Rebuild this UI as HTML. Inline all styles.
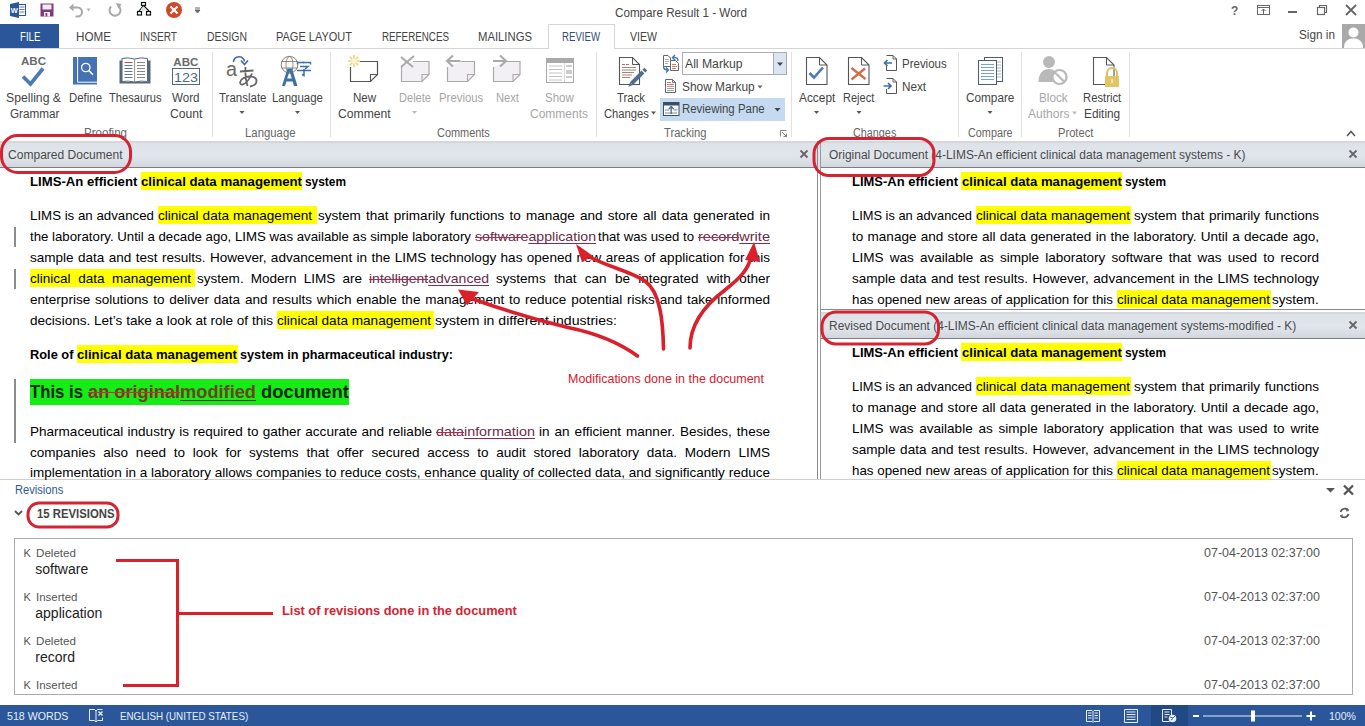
<!DOCTYPE html><html><head><meta charset="utf-8"><title>Compare Result 1 - Word</title><style>
*{margin:0;padding:0;box-sizing:border-box}
html,body{width:1365px;height:726px;overflow:hidden;background:#fff;font-family:"Liberation Sans",sans-serif}
.t{position:absolute;white-space:nowrap;transform-origin:0 0}
.del{text-decoration:line-through;text-decoration-color:#b02a4a;color:#6a2a48;text-decoration-skip-ink:none}
.gdel{text-decoration:line-through;text-decoration-color:#d02a3a;color:#7a3a22;text-decoration-skip-ink:none}
.gins{text-decoration:underline;text-decoration-color:#3a3020;color:#6a4420;text-decoration-skip-ink:none;text-underline-offset:2px}
.ins{text-decoration:underline;text-decoration-color:#8a2a48;color:#6a2a48;text-underline-offset:2px;text-decoration-skip-ink:none}
</style></head><body><div style="position:absolute;left:0px;top:48px;width:1365px;height:1px;background:#d5d5d5"></div><div style="position:absolute;left:0px;top:24px;width:59px;height:24px;background:#2b579a"></div><div style="position:absolute;left:548px;top:24px;width:67px;height:25px;background:#fff;border:1px solid #d5d5d5;border-bottom:none"></div><div style="position:absolute;left:1342px;top:24px;width:23px;height:24px;background:#a9a9a9"></div><div style="position:absolute;left:660px;top:97.5px;width:125px;height:23px;background:#c5daf0"></div><div style="position:absolute;left:212px;top:52px;width:1px;height:85px;background:#e1e1e1"></div><div style="position:absolute;left:330px;top:52px;width:1px;height:85px;background:#e1e1e1"></div><div style="position:absolute;left:596px;top:52px;width:1px;height:85px;background:#e1e1e1"></div><div style="position:absolute;left:791px;top:52px;width:1px;height:85px;background:#e1e1e1"></div><div style="position:absolute;left:958px;top:52px;width:1px;height:85px;background:#e1e1e1"></div><div style="position:absolute;left:1021px;top:52px;width:1px;height:85px;background:#e1e1e1"></div><div style="position:absolute;left:1129px;top:52px;width:1px;height:85px;background:#e1e1e1"></div><div style="position:absolute;left:0px;top:141px;width:817px;height:2px;background:#d6d6db"></div><div style="position:absolute;left:0px;top:143px;width:817px;height:24px;background:linear-gradient(#dde1e8 0%,#e1e5ec 50%,#d9dde4 80%,#d3d6dc 100%)"></div><div style="position:absolute;left:0px;top:167px;width:817px;height:1px;background:#7c7c86"></div><div style="position:absolute;left:821px;top:141px;width:544px;height:2px;background:#d6d6db"></div><div style="position:absolute;left:821px;top:143px;width:544px;height:24px;background:linear-gradient(#dde1e8 0%,#e1e5ec 50%,#d9dde4 80%,#d3d6dc 100%)"></div><div style="position:absolute;left:821px;top:167px;width:544px;height:1px;background:#7c7c86"></div><div style="position:absolute;left:821px;top:312px;width:544px;height:2px;background:#d6d6db"></div><div style="position:absolute;left:821px;top:314px;width:544px;height:24px;background:linear-gradient(#dde1e8 0%,#e1e5ec 50%,#d9dde4 80%,#d3d6dc 100%)"></div><div style="position:absolute;left:821px;top:338px;width:544px;height:1px;background:#7c7c86"></div><div style="position:absolute;left:817px;top:141px;width:1px;height:338px;background:#8a8a8a"></div><div style="position:absolute;left:820px;top:141px;width:1px;height:338px;background:#9a9a9a"></div><div style="position:absolute;left:818px;top:141px;width:2px;height:27px;background:#dfe3ea"></div><div style="position:absolute;left:821px;top:309px;width:544px;height:1px;background:#8a8a8a"></div><div style="position:absolute;left:0px;top:479px;width:1365px;height:1px;background:#cfcfcf"></div><div style="position:absolute;left:14px;top:227px;width:2px;height:20px;background:#8c8c8c"></div><div style="position:absolute;left:14px;top:269px;width:2px;height:20px;background:#8c8c8c"></div><div style="position:absolute;left:14px;top:379px;width:2px;height:64px;background:#8c8c8c"></div><div style="position:absolute;left:141px;top:172px;width:161px;height:18px;background:#ffff00"></div><div style="position:absolute;left:158px;top:206px;width:159px;height:18px;background:#ffff00"></div><div style="position:absolute;left:30px;top:269px;width:165px;height:18px;background:#ffff00"></div><div style="position:absolute;left:277px;top:311px;width:157px;height:18px;background:#ffff00"></div><div style="position:absolute;left:77px;top:345px;width:161px;height:18px;background:#ffff00"></div><div style="position:absolute;left:30px;top:379px;width:319px;height:26px;background:#16ec16"></div><div style="position:absolute;left:961px;top:172px;width:161px;height:18px;background:#ffff00"></div><div style="position:absolute;left:976px;top:206px;width:155px;height:18px;background:#ffff00"></div><div style="position:absolute;left:1117px;top:290px;width:154px;height:18px;background:#ffff00"></div><div style="position:absolute;left:961px;top:343px;width:161px;height:18px;background:#ffff00"></div><div style="position:absolute;left:976px;top:377px;width:155px;height:18px;background:#ffff00"></div><div style="position:absolute;left:1117px;top:461px;width:154px;height:18px;background:#ffff00"></div><div style="position:absolute;left:14px;top:538px;width:1339px;height:157px;border:1px solid #ababab"></div><div style="position:absolute;left:0px;top:705px;width:1365px;height:21px;background:#2b579a"></div><div style="position:absolute;left:1151px;top:705px;width:37px;height:21px;background:#214a84"></div><div class="t" style="left:30px;top:176.00px;font-size:12.6px;line-height:12.6px;color:#000;font-weight:bold;;transform:scaleX(1.0436);">LIMS-An efficient </div><div class="t" style="left:141px;top:176.00px;font-size:12.6px;line-height:12.6px;color:#000;font-weight:bold;;transform:scaleX(1.0504);">clinical data management</div><div class="t" style="left:305px;top:176.00px;font-size:12.6px;line-height:12.6px;color:#000;font-weight:bold;;transform:scaleX(0.9442);">system</div><div class="t" style="left:30px;top:210.00px;font-size:12.6px;line-height:12.6px;color:#000;font-weight:normal;;transform:scaleX(1.0542);">LIMS is an advanced</div><div class="t" style="left:158px;top:210.00px;font-size:12.6px;line-height:12.6px;color:#000;font-weight:normal;;transform:scaleX(1.0750);width:143.26px;white-space:normal;text-align:justify;text-align-last:justify;height:12.6px;">clinical data management</div><div class="t" style="left:318px;top:210.00px;font-size:12.6px;line-height:12.6px;color:#000;font-weight:normal;;transform:scaleX(1.0750);width:420.47px;white-space:normal;text-align:justify;text-align-last:justify;height:12.6px;">system that primarily functions to manage and store all data generated in</div><div class="t" style="left:30px;top:231.00px;font-size:12.6px;line-height:12.6px;color:#000;font-weight:normal;;transform:scaleX(1.0505);">the laboratory. Until a decade ago, LIMS was available as simple laboratory</div><div class="t" style="left:475px;top:231.00px;font-size:12.6px;line-height:12.6px;color:#000;font-weight:normal;;transform:scaleX(1.1222);"><span class="del">software</span><span class="ins">application</span></div><div class="t" style="left:598px;top:231.00px;font-size:12.6px;line-height:12.6px;color:#000;font-weight:normal;;transform:scaleX(1.0467);">that was used to</div><div class="t" style="left:698px;top:231.00px;font-size:12.6px;line-height:12.6px;color:#000;font-weight:normal;;transform:scaleX(1.1558);"><span class="del">record</span><span class="ins">write</span></div><div class="t" style="left:30px;top:252.00px;font-size:12.6px;line-height:12.6px;color:#000;font-weight:normal;;transform:scaleX(1.0750);width:688.37px;white-space:normal;text-align:justify;text-align-last:justify;height:12.6px;">sample data and test results. However, advancement in the LIMS technology has opened new areas of application for this</div><div class="t" style="left:30px;top:273.00px;font-size:12.6px;line-height:12.6px;color:#000;font-weight:normal;;transform:scaleX(1.0750);width:149.77px;white-space:normal;text-align:justify;text-align-last:justify;height:12.6px;">clinical data management</div><div class="t" style="left:197px;top:273.00px;font-size:12.6px;line-height:12.6px;color:#000;font-weight:normal;;transform:scaleX(1.0750);width:153.49px;white-space:normal;text-align:justify;text-align-last:justify;height:12.6px;">system. Modern LIMS are</div><div class="t" style="left:369px;top:273.00px;font-size:12.6px;line-height:12.6px;color:#000;font-weight:normal;;transform:scaleX(1.1127);"><span class="del">intelligent</span><span class="ins">advanced</span></div><div class="t" style="left:496px;top:273.00px;font-size:12.6px;line-height:12.6px;color:#000;font-weight:normal;;transform:scaleX(1.0750);width:254.88px;white-space:normal;text-align:justify;text-align-last:justify;height:12.6px;">systems that can be integrated with other</div><div class="t" style="left:30px;top:294.00px;font-size:12.6px;line-height:12.6px;color:#000;font-weight:normal;;transform:scaleX(1.0750);width:688.37px;white-space:normal;text-align:justify;text-align-last:justify;height:12.6px;">enterprise solutions to deliver data and results which enable the management to reduce potential risks and take informed</div><div class="t" style="left:30px;top:315.00px;font-size:12.6px;line-height:12.6px;color:#000;font-weight:normal;;transform:scaleX(1.0757);">decisions. Let’s take a look at role of this</div><div class="t" style="left:277px;top:315.00px;font-size:12.6px;line-height:12.6px;color:#000;font-weight:normal;;transform:scaleX(1.0783);">clinical data management</div><div class="t" style="left:435px;top:315.00px;font-size:12.6px;line-height:12.6px;color:#000;font-weight:normal;;transform:scaleX(1.1175);">system in different industries:</div><div class="t" style="left:30px;top:349.00px;font-size:12.6px;line-height:12.6px;color:#000;font-weight:bold;;transform:scaleX(1.0176);">Role of </div><div class="t" style="left:77px;top:349.00px;font-size:12.6px;line-height:12.6px;color:#000;font-weight:bold;;transform:scaleX(1.0438);">clinical data management</div><div class="t" style="left:240px;top:349.00px;font-size:12.6px;line-height:12.6px;color:#000;font-weight:bold;;transform:scaleX(1.0077);">system in pharmaceutical industry:</div><div class="t" style="left:30px;top:384.00px;font-size:17.5px;line-height:17.5px;color:#0a2a0a;font-weight:bold;;transform:scaleX(0.9560);">This is</div><div class="t" style="left:88px;top:384.00px;font-size:17.5px;line-height:17.5px;color:#000;font-weight:bold;;transform:scaleX(1.0409);"><span class="gdel">an original</span><span class="gins">modified</span></div><div class="t" style="left:261px;top:384.00px;font-size:17.5px;line-height:17.5px;color:#0a2a0a;font-weight:bold;;transform:scaleX(1.0523);">document</div><div class="t" style="left:30px;top:426.00px;font-size:12.6px;line-height:12.6px;color:#000;font-weight:normal;;transform:scaleX(1.0750);width:373.95px;white-space:normal;text-align:justify;text-align-last:justify;height:12.6px;">Pharmaceutical industry is required to gather accurate and reliable</div><div class="t" style="left:436px;top:426.00px;font-size:12.6px;line-height:12.6px;color:#000;font-weight:normal;;transform:scaleX(1.1402);"><span class="del">data</span><span class="ins">information</span></div><div class="t" style="left:539px;top:426.00px;font-size:12.6px;line-height:12.6px;color:#000;font-weight:normal;;transform:scaleX(1.0750);width:214.88px;white-space:normal;text-align:justify;text-align-last:justify;height:12.6px;">in an efficient manner. Besides, these</div><div class="t" style="left:30px;top:447.00px;font-size:12.6px;line-height:12.6px;color:#000;font-weight:normal;;transform:scaleX(1.0750);width:688.37px;white-space:normal;text-align:justify;text-align-last:justify;height:12.6px;">companies also need to look for systems that offer secured access to audit stored laboratory data. Modern LIMS</div><div class="t" style="left:30px;top:467.00px;font-size:12.6px;line-height:12.6px;color:#000;font-weight:normal;;transform:scaleX(1.0731);">implementation in a laboratory allows companies to reduce costs, enhance quality of collected data, and significantly reduce</div><div class="t" style="left:852px;top:176.00px;font-size:12.6px;line-height:12.6px;color:#000;font-weight:bold;;transform:scaleX(1.0305);">LIMS-An efficient</div><div class="t" style="left:962px;top:176.00px;font-size:12.6px;line-height:12.6px;color:#000;font-weight:bold;;transform:scaleX(1.0438);">clinical data management</div><div class="t" style="left:1125px;top:176.00px;font-size:12.6px;line-height:12.6px;color:#000;font-weight:bold;;transform:scaleX(0.9442);">system</div><div class="t" style="left:852px;top:210.00px;font-size:12.6px;line-height:12.6px;color:#000;font-weight:normal;;transform:scaleX(1.0202);">LIMS is an advanced</div><div class="t" style="left:976px;top:210.00px;font-size:12.6px;line-height:12.6px;color:#000;font-weight:normal;;transform:scaleX(1.0750);width:143.26px;white-space:normal;text-align:justify;text-align-last:justify;height:12.6px;">clinical data management</div><div class="t" style="left:1134px;top:210.00px;font-size:12.6px;line-height:12.6px;color:#000;font-weight:normal;;transform:scaleX(1.0750);width:172.09px;white-space:normal;text-align:justify;text-align-last:justify;height:12.6px;">system that primarily functions</div><div class="t" style="left:852px;top:231.00px;font-size:12.6px;line-height:12.6px;color:#000;font-weight:normal;;transform:scaleX(1.0750);width:434.42px;white-space:normal;text-align:justify;text-align-last:justify;height:12.6px;">to manage and store all data generated in the laboratory. Until a decade ago,</div><div class="t" style="left:852px;top:252.00px;font-size:12.6px;line-height:12.6px;color:#000;font-weight:normal;;transform:scaleX(1.0750);width:434.42px;white-space:normal;text-align:justify;text-align-last:justify;height:12.6px;">LIMS was available as simple laboratory software that was used to record</div><div class="t" style="left:852px;top:273.00px;font-size:12.6px;line-height:12.6px;color:#000;font-weight:normal;;transform:scaleX(1.0750);width:434.42px;white-space:normal;text-align:justify;text-align-last:justify;height:12.6px;">sample data and test results. However, advancement in the LIMS technology</div><div class="t" style="left:852px;top:294.00px;font-size:12.6px;line-height:12.6px;color:#000;font-weight:normal;;transform:scaleX(1.0590);">has opened new areas of application for this</div><div class="t" style="left:1117px;top:294.00px;font-size:12.6px;line-height:12.6px;color:#000;font-weight:normal;;transform:scaleX(1.0713);">clinical data management</div><div class="t" style="left:1272px;top:294.00px;font-size:12.6px;line-height:12.6px;color:#000;font-weight:normal;;transform:scaleX(1.0750);width:43.72px;white-space:normal;text-align:justify;text-align-last:justify;height:12.6px;">system.</div><div class="t" style="left:852px;top:347.00px;font-size:12.6px;line-height:12.6px;color:#000;font-weight:bold;;transform:scaleX(1.0305);">LIMS-An efficient</div><div class="t" style="left:962px;top:347.00px;font-size:12.6px;line-height:12.6px;color:#000;font-weight:bold;;transform:scaleX(1.0438);">clinical data management</div><div class="t" style="left:1125px;top:347.00px;font-size:12.6px;line-height:12.6px;color:#000;font-weight:bold;;transform:scaleX(0.9442);">system</div><div class="t" style="left:852px;top:381.00px;font-size:12.6px;line-height:12.6px;color:#000;font-weight:normal;;transform:scaleX(1.0202);">LIMS is an advanced</div><div class="t" style="left:976px;top:381.00px;font-size:12.6px;line-height:12.6px;color:#000;font-weight:normal;;transform:scaleX(1.0750);width:143.26px;white-space:normal;text-align:justify;text-align-last:justify;height:12.6px;">clinical data management</div><div class="t" style="left:1134px;top:381.00px;font-size:12.6px;line-height:12.6px;color:#000;font-weight:normal;;transform:scaleX(1.0750);width:172.09px;white-space:normal;text-align:justify;text-align-last:justify;height:12.6px;">system that primarily functions</div><div class="t" style="left:852px;top:402.00px;font-size:12.6px;line-height:12.6px;color:#000;font-weight:normal;;transform:scaleX(1.0750);width:434.42px;white-space:normal;text-align:justify;text-align-last:justify;height:12.6px;">to manage and store all data generated in the laboratory. Until a decade ago,</div><div class="t" style="left:852px;top:423.00px;font-size:12.6px;line-height:12.6px;color:#000;font-weight:normal;;transform:scaleX(1.0750);width:434.42px;white-space:normal;text-align:justify;text-align-last:justify;height:12.6px;">LIMS was available as simple laboratory application that was used to write</div><div class="t" style="left:852px;top:444.00px;font-size:12.6px;line-height:12.6px;color:#000;font-weight:normal;;transform:scaleX(1.0750);width:434.42px;white-space:normal;text-align:justify;text-align-last:justify;height:12.6px;">sample data and test results. However, advancement in the LIMS technology</div><div class="t" style="left:852px;top:465.00px;font-size:12.6px;line-height:12.6px;color:#000;font-weight:normal;;transform:scaleX(1.0590);">has opened new areas of application for this</div><div class="t" style="left:1117px;top:465.00px;font-size:12.6px;line-height:12.6px;color:#000;font-weight:normal;;transform:scaleX(1.0713);">clinical data management</div><div class="t" style="left:1272px;top:465.00px;font-size:12.6px;line-height:12.6px;color:#000;font-weight:normal;;transform:scaleX(1.0750);width:43.72px;white-space:normal;text-align:justify;text-align-last:justify;height:12.6px;">system.</div><div class="t" style="left:615px;top:6.50px;font-size:12.5px;line-height:12.5px;color:#444;font-weight:normal;;transform:scaleX(0.9329);">Compare Result 1 - Word</div><div class="t" style="left:19.5px;top:31.00px;font-size:12.5px;line-height:12.5px;color:#fff;font-weight:normal;;transform:scaleX(0.7763);">FILE</div><div class="t" style="left:76px;top:31.00px;font-size:12.5px;line-height:12.5px;color:#444;font-weight:normal;;transform:scaleX(0.9333);">HOME</div><div class="t" style="left:140px;top:31.00px;font-size:12.5px;line-height:12.5px;color:#444;font-weight:normal;;transform:scaleX(0.8110);">INSERT</div><div class="t" style="left:207px;top:31.00px;font-size:12.5px;line-height:12.5px;color:#444;font-weight:normal;;transform:scaleX(0.8344);">DESIGN</div><div class="t" style="left:276px;top:31.00px;font-size:12.5px;line-height:12.5px;color:#444;font-weight:normal;;transform:scaleX(0.8799);">PAGE LAYOUT</div><div class="t" style="left:382px;top:31.00px;font-size:12.5px;line-height:12.5px;color:#444;font-weight:normal;;transform:scaleX(0.7842);">REFERENCES</div><div class="t" style="left:478px;top:31.00px;font-size:12.5px;line-height:12.5px;color:#444;font-weight:normal;;transform:scaleX(0.9038);">MAILINGS</div><div class="t" style="left:630px;top:31.00px;font-size:12.5px;line-height:12.5px;color:#444;font-weight:normal;;transform:scaleX(0.8450);">VIEW</div><div class="t" style="left:562px;top:31.00px;font-size:12.5px;line-height:12.5px;color:#2f5078;font-weight:normal;;transform:scaleX(0.7706);">REVIEW</div><div class="t" style="left:1299px;top:29.00px;font-size:12.5px;line-height:12.5px;color:#444;font-weight:normal;;transform:scaleX(0.9416);">Sign in</div><div class="t" style="left:6px;top:92.00px;font-size:12.5px;line-height:12.5px;color:#444;font-weight:normal;;transform:scaleX(0.9770);">Spelling &amp;</div><div class="t" style="left:9.5px;top:107.50px;font-size:12.5px;line-height:12.5px;color:#444;font-weight:normal;;transform:scaleX(0.9378);">Grammar</div><div class="t" style="left:68.5px;top:92.00px;font-size:12.5px;line-height:12.5px;color:#444;font-weight:normal;;transform:scaleX(0.9131);">Define</div><div class="t" style="left:109px;top:92.00px;font-size:12.5px;line-height:12.5px;color:#444;font-weight:normal;;transform:scaleX(0.8889);">Thesaurus</div><div class="t" style="left:171.5px;top:92.00px;font-size:12.5px;line-height:12.5px;color:#444;font-weight:normal;;transform:scaleX(0.9278);">Word</div><div class="t" style="left:169.5px;top:107.50px;font-size:12.5px;line-height:12.5px;color:#444;font-weight:normal;;transform:scaleX(0.9742);">Count</div><div class="t" style="left:218.5px;top:92.00px;font-size:12.5px;line-height:12.5px;color:#444;font-weight:normal;;transform:scaleX(0.9195);">Translate</div><div class="t" style="left:271.7px;top:92.00px;font-size:12.5px;line-height:12.5px;color:#444;font-weight:normal;;transform:scaleX(0.9169);">Language</div><div class="t" style="left:352.6px;top:92.00px;font-size:12.5px;line-height:12.5px;color:#444;font-weight:normal;;transform:scaleX(0.9274);">New</div><div class="t" style="left:338px;top:107.50px;font-size:12.5px;line-height:12.5px;color:#444;font-weight:normal;;transform:scaleX(0.9725);">Comment</div><div class="t" style="left:398.7px;top:92.00px;font-size:12.5px;line-height:12.5px;color:#a6a6a6;font-weight:normal;;transform:scaleX(0.8854);">Delete</div><div class="t" style="left:438.5px;top:92.00px;font-size:12.5px;line-height:12.5px;color:#a6a6a6;font-weight:normal;;transform:scaleX(0.9108);">Previous</div><div class="t" style="left:495.6px;top:92.00px;font-size:12.5px;line-height:12.5px;color:#a6a6a6;font-weight:normal;;transform:scaleX(0.8909);">Next</div><div class="t" style="left:545px;top:92.00px;font-size:12.5px;line-height:12.5px;color:#a6a6a6;font-weight:normal;;transform:scaleX(0.9207);">Show</div><div class="t" style="left:530.4px;top:107.50px;font-size:12.5px;line-height:12.5px;color:#a6a6a6;font-weight:normal;;transform:scaleX(0.9597);">Comments</div><div class="t" style="left:617px;top:92.00px;font-size:12.5px;line-height:12.5px;color:#444;font-weight:normal;;transform:scaleX(0.9092);">Track</div><div class="t" style="left:603.7px;top:107.50px;font-size:12.5px;line-height:12.5px;color:#444;font-weight:normal;;transform:scaleX(0.8972);">Changes</div><div class="t" style="left:685px;top:57.70px;font-size:12.5px;line-height:12.5px;color:#444;font-weight:normal;;transform:scaleX(0.9755);">All Markup</div><div class="t" style="left:682px;top:80.50px;font-size:12.5px;line-height:12.5px;color:#444;font-weight:normal;;transform:scaleX(0.9511);">Show Markup</div><div class="t" style="left:682.4px;top:103.20px;font-size:12.5px;line-height:12.5px;color:#444;font-weight:normal;;transform:scaleX(0.9143);">Reviewing Pane</div><div class="t" style="left:798.5px;top:92.00px;font-size:12.5px;line-height:12.5px;color:#444;font-weight:normal;;transform:scaleX(0.9498);">Accept</div><div class="t" style="left:843.4px;top:92.00px;font-size:12.5px;line-height:12.5px;color:#444;font-weight:normal;;transform:scaleX(0.8832);">Reject</div><div class="t" style="left:902.3px;top:57.50px;font-size:12.5px;line-height:12.5px;color:#444;font-weight:normal;;transform:scaleX(0.9190);">Previous</div><div class="t" style="left:902.3px;top:80.50px;font-size:12.5px;line-height:12.5px;color:#444;font-weight:normal;;transform:scaleX(0.9376);">Next</div><div class="t" style="left:965.6px;top:92.00px;font-size:12.5px;line-height:12.5px;color:#444;font-weight:normal;;transform:scaleX(0.9412);">Compare</div><div class="t" style="left:1039.4px;top:92.00px;font-size:12.5px;line-height:12.5px;color:#a6a6a6;font-weight:normal;;transform:scaleX(0.9353);">Block</div><div class="t" style="left:1028.3px;top:107.50px;font-size:12.5px;line-height:12.5px;color:#a6a6a6;font-weight:normal;;transform:scaleX(0.9630);">Authors</div><div class="t" style="left:1083.4px;top:92.00px;font-size:12.5px;line-height:12.5px;color:#444;font-weight:normal;;transform:scaleX(0.9015);">Restrict</div><div class="t" style="left:1084.4px;top:107.50px;font-size:12.5px;line-height:12.5px;color:#444;font-weight:normal;;transform:scaleX(0.9468);">Editing</div><div class="t" style="left:84px;top:126.50px;font-size:12px;line-height:12px;color:#666;font-weight:normal;;transform:scaleX(0.9619);">Proofing</div><div class="t" style="left:245px;top:126.50px;font-size:12px;line-height:12px;color:#666;font-weight:normal;;transform:scaleX(0.9459);">Language</div><div class="t" style="left:436.7px;top:126.50px;font-size:12px;line-height:12px;color:#666;font-weight:normal;;transform:scaleX(0.9101);">Comments</div><div class="t" style="left:664px;top:126.50px;font-size:12px;line-height:12px;color:#666;font-weight:normal;;transform:scaleX(0.9325);">Tracking</div><div class="t" style="left:852.7px;top:126.50px;font-size:12px;line-height:12px;color:#666;font-weight:normal;;transform:scaleX(0.9012);">Changes</div><div class="t" style="left:967.8px;top:126.50px;font-size:12px;line-height:12px;color:#666;font-weight:normal;;transform:scaleX(0.9036);">Compare</div><div class="t" style="left:1057.5px;top:126.50px;font-size:12px;line-height:12px;color:#666;font-weight:normal;;transform:scaleX(0.9286);">Protect</div><div class="t" style="left:7.5px;top:149.00px;font-size:12px;line-height:12px;color:#4a4a4a;font-weight:normal;;transform:scaleX(1.0038);">Compared Document</div><div class="t" style="left:828.5px;top:149.00px;font-size:12px;line-height:12px;color:#4a4a4a;font-weight:normal;;transform:scaleX(0.9965);">Original Document (4-LIMS-An efficient clinical data management systems - K)</div><div class="t" style="left:828.7px;top:320.00px;font-size:12px;line-height:12px;color:#4a4a4a;font-weight:normal;;transform:scaleX(0.9957);">Revised Document (4-LIMS-An efficient clinical data management systems-modified - K)</div><div class="t" style="left:14.5px;top:483.50px;font-size:12.5px;line-height:12.5px;color:#2e5b98;font-weight:normal;z-index:5;;transform:scaleX(0.8913);">Revisions</div><div class="t" style="left:36.5px;top:507.70px;font-size:12.5px;line-height:12.5px;color:#444;font-weight:bold;z-index:5;;transform:scaleX(0.9069);">15 REVISIONS</div><div class="t" style="left:23.4px;top:548.00px;font-size:11px;line-height:11px;color:#555;font-weight:normal;z-index:5;;">K</div><div class="t" style="left:36px;top:548.00px;font-size:11px;line-height:11px;color:#555;font-weight:normal;z-index:5;;transform:scaleX(1.0548);">Deleted</div><div class="t" style="left:35.3px;top:561.50px;font-size:14px;line-height:14px;color:#222;font-weight:normal;z-index:5;;">software</div><div class="t" style="left:1204px;top:547.00px;font-size:12px;line-height:12px;color:#555;font-weight:normal;z-index:5;;transform:scaleX(1.0409);">07-04-2013 02:37:00</div><div class="t" style="left:23.4px;top:592.00px;font-size:11px;line-height:11px;color:#555;font-weight:normal;z-index:5;;">K</div><div class="t" style="left:36px;top:592.00px;font-size:11px;line-height:11px;color:#555;font-weight:normal;z-index:5;;transform:scaleX(1.0440);">Inserted</div><div class="t" style="left:35.3px;top:605.50px;font-size:14px;line-height:14px;color:#222;font-weight:normal;z-index:5;;">application</div><div class="t" style="left:1204px;top:591.00px;font-size:12px;line-height:12px;color:#555;font-weight:normal;z-index:5;;transform:scaleX(1.0409);">07-04-2013 02:37:00</div><div class="t" style="left:23.4px;top:636.00px;font-size:11px;line-height:11px;color:#555;font-weight:normal;z-index:5;;">K</div><div class="t" style="left:36px;top:636.00px;font-size:11px;line-height:11px;color:#555;font-weight:normal;z-index:5;;transform:scaleX(1.0548);">Deleted</div><div class="t" style="left:35.3px;top:649.50px;font-size:14px;line-height:14px;color:#222;font-weight:normal;z-index:5;;">record</div><div class="t" style="left:1204px;top:635.00px;font-size:12px;line-height:12px;color:#555;font-weight:normal;z-index:5;;transform:scaleX(1.0409);">07-04-2013 02:37:00</div><div class="t" style="left:23.4px;top:680.00px;font-size:11px;line-height:11px;color:#555;font-weight:normal;z-index:5;;">K</div><div class="t" style="left:36px;top:680.00px;font-size:11px;line-height:11px;color:#555;font-weight:normal;z-index:5;;transform:scaleX(1.0440);">Inserted</div><div class="t" style="left:1204px;top:679.00px;font-size:12px;line-height:12px;color:#555;font-weight:normal;z-index:5;;transform:scaleX(1.0409);">07-04-2013 02:37:00</div><div class="t" style="left:7.2px;top:711.00px;font-size:11px;line-height:11px;color:#e8eef7;font-weight:normal;z-index:5;;transform:scaleX(0.9657);">518 WORDS</div><div class="t" style="left:120.4px;top:711.00px;font-size:11px;line-height:11px;color:#e8eef7;font-weight:normal;z-index:5;;transform:scaleX(0.8913);">ENGLISH (UNITED STATES)</div><div class="t" style="left:1329px;top:711.00px;font-size:11px;line-height:11px;color:#e8eef7;font-weight:normal;z-index:5;;transform:scaleX(0.9595);">100%</div><div class="t" style="left:568px;top:372.20px;font-size:13.5px;line-height:13.5px;color:#d4202e;font-weight:normal;z-index:8;;transform:scaleX(0.9228);">Modifications done in the document</div><div class="t" style="left:282.3px;top:604.50px;font-size:12.5px;line-height:12.5px;color:#d42433;font-weight:bold;z-index:8;;transform:scaleX(1.0241);">List of revisions done in the document</div><div style="position:absolute;left:0px;top:480px;width:1365px;height:225px;background:#fff"></div><div style="position:absolute;left:14px;top:538px;width:1339px;height:157px;border:1px solid #ababab"></div><div style="position:absolute;left:0px;top:705px;width:1365px;height:21px;background:#2b579a"></div><div style="position:absolute;left:1151px;top:705px;width:37px;height:21px;background:#214a84"></div>
<svg style="position:absolute;left:0;top:0;z-index:6" width="1365" height="726" viewBox="0 0 1365 726">
<!-- QAT: Word icon -->
<path d="M10 4 L19 2 L19 18 L10 16 Z" fill="#2b579a"/>
<rect x="18.5" y="4.5" width="7" height="11" fill="#fff" stroke="#2b579a" stroke-width="1"/>
<path d="M19.5 7 h5 M19.5 9.5 h5 M19.5 12 h5" stroke="#2b579a" stroke-width="0.8"/>
<text x="10.8" y="13.2" font-family="Liberation Sans" font-size="7.5" font-weight="bold" fill="#fff">W</text>
<!-- Save -->
<path d="M40.5 3.5 h13 v13 h-13 Z" fill="#80397b"/>
<rect x="42.5" y="4.5" width="9" height="5" fill="#f4eef4"/>
<rect x="44" y="12" width="6" height="4.5" fill="#f4eef4"/>
<rect x="45.5" y="13" width="1.8" height="3.5" fill="#80397b"/>
<!-- Undo -->
<path d="M71.5 7.5 h6 a4.5 4.5 0 0 1 0 9 h-2" fill="none" stroke="#a8a8a8" stroke-width="2"/>
<path d="M69 7.5 L73.5 3.5 L73.5 11.5 Z" fill="#a8a8a8"/>
<path d="M86.5 8.5 h4 l-2 3 Z" fill="#b0b0b0"/>
<!-- Redo -->
<path d="M118.5 6 A5.5 5.5 0 1 1 111 6.5" fill="none" stroke="#a8a8a8" stroke-width="2"/>
<path d="M116 3 L121.5 4 L118.5 9 Z" fill="#a8a8a8"/>
<!-- Tree icon -->
<rect x="141.5" y="2.5" width="4" height="3" fill="none" stroke="#111" stroke-width="1.2"/>
<path d="M143.5 5.5 L139 11 M143.5 5.5 L149 11" stroke="#111" stroke-width="1.1"/>
<path d="M141 9 L143.5 6.5 L146 9 L143.5 11.5 Z" fill="#cfe0e8"/>
<rect x="137.5" y="11.5" width="4" height="3.5" fill="none" stroke="#111" stroke-width="1.2"/>
<rect x="146.5" y="11.5" width="4" height="3.5" fill="none" stroke="#111" stroke-width="1.2"/>
<!-- red X circle -->
<circle cx="174" cy="10" r="8" fill="#d24726"/>
<path d="M170.5 6.5 L177.5 13.5 M177.5 6.5 L170.5 13.5" stroke="#fff" stroke-width="2.2"/>
<!-- customize -->
<path d="M195 8 h5 M195 10 h5 l-2.5 3 Z" stroke="#666" stroke-width="1" fill="#666"/>

<!-- title bar right -->
<text x="1231" y="15" font-family="Liberation Sans" font-size="12" font-weight="bold" fill="#666">?</text>
<rect x="1257.5" y="5.5" width="12" height="9" fill="none" stroke="#666" stroke-width="1"/>
<path d="M1258 7.5 h11" stroke="#666" stroke-width="1"/>
<path d="M1263.5 14 v-5 M1261.5 11 l2 -2 l2 2" stroke="#666" stroke-width="1" fill="none"/>
<path d="M1288 12 h9" stroke="#666" stroke-width="2"/>
<rect x="1317.5" y="7.5" width="7" height="7" fill="none" stroke="#666" stroke-width="1.2"/>
<path d="M1319.5 7.5 v-2 h7 v7 h-2" fill="none" stroke="#666" stroke-width="1.2"/>
<path d="M1346 5 L1356 15 M1356 5 L1346 15" stroke="#666" stroke-width="1.8"/>
<!-- avatar silhouette -->
<circle cx="1353.5" cy="32.5" r="5" fill="#fff"/>
<path d="M1344 48 C1344 41 1348 38.5 1353.5 38.5 C1359 38.5 1363 41 1363 48 Z" fill="#fff"/>

<!-- Spelling -->
<text x="21" y="64.8" font-family="Liberation Sans" font-size="11.2" font-weight="bold" fill="#6a6a6a" textLength="25" lengthAdjust="spacingAndGlyphs">ABC</text>
<path d="M23 76.5 L30.5 84 L43 68.5" fill="none" stroke="#4a7ab7" stroke-width="3.6"/>
<!-- Define -->
<rect x="73" y="57" width="24" height="27.5" fill="#4472b4"/>
<path d="M77.6 57 v25.2 h19.5" fill="none" stroke="#fff" stroke-width="1"/>
<circle cx="85.8" cy="67.5" r="4.2" fill="none" stroke="#fff" stroke-width="1.3"/>
<path d="M88.8 70.5 L93 74.8" stroke="#fff" stroke-width="1.6"/>
<!-- Thesaurus -->
<path d="M119.5 60.5 h2.5 v21.5 h26 v-21.5 h2.5 v23 h-31 Z" fill="#56687a"/>
<path d="M122 58.5 Q128 57 134.6 59 Q141 57 147.5 58.5 V81.5 Q141 80.5 134.6 82 Q128 80.5 122 81.5 Z" fill="#fff" stroke="#56687a" stroke-width="1"/>
<path d="M134.6 59 v23" stroke="#777" stroke-width="0.8"/>
<path d="M124.5 62.5 h8" stroke="#c0504d" stroke-width="1"/>
<path d="M124.5 65.5 h8 M124.5 68.5 h8 M124.5 71.5 h8 M124.5 74.5 h8 M124.5 77.5 h8" stroke="#56687a" stroke-width="0.9"/>
<path d="M137 62.5 h8 M137 65.5 h8 M137 68.5 h8 M137 71.5 h8 M137 74.5 h8 M137 77.5 h8" stroke="#7a7a7a" stroke-width="0.9"/>
<!-- Word Count -->
<text x="173.3" y="65.8" font-family="Liberation Sans" font-size="11.2" font-weight="bold" fill="#6a6a6a" textLength="25" lengthAdjust="spacingAndGlyphs">ABC</text>
<rect x="172.5" y="68.5" width="27" height="16" fill="#fff" stroke="#4e6b82" stroke-width="1"/>
<text x="174" y="82" font-family="Liberation Sans" font-size="13" fill="#4a6a82" textLength="24" lengthAdjust="spacingAndGlyphs">123</text>

<!-- Translate -->
<text x="226" y="75.8" font-family="Liberation Sans" font-size="20" fill="#6a6a6a" textLength="11" lengthAdjust="spacingAndGlyphs">a</text>
<path d="M233.5 62 A5.5 5 0 0 1 244.5 61.5" fill="none" stroke="#3d6fa8" stroke-width="1.6"/>
<path d="M241 60.5 L244.5 64.5 L248 60.5" fill="none" stroke="#3d6fa8" stroke-width="1.6"/>
<path d="M240 71.5 L253.5 70.5 M245.5 67 C245 74 245.5 80 247.5 86 M252 73.5 C249.5 79 245.5 84 242.5 84.5 C239 85 239.5 80 243.5 78 C248.5 75.5 256.5 76 256.5 81 C256.5 84.5 253 86 250 86.5" fill="none" stroke="#666" stroke-width="1.8"/>
<!-- Language -->
<circle cx="289.5" cy="64.7" r="8.3" fill="#fff" stroke="#8a7d6e" stroke-width="1"/>
<ellipse cx="289.5" cy="64.7" rx="3.5" ry="8.3" fill="none" stroke="#8a7d6e" stroke-width="0.9"/>
<path d="M281.5 61.5 h16 M281.5 68 h16" stroke="#8a7d6e" stroke-width="0.9"/>
<path d="M282 86 L287.5 68.5 L292 68.5 L297.5 86 h-3.5 l-1.4 -4.5 h-6.2 l-1.4 4.5 Z M287.2 78.5 h4.6 l-2.3 -7 Z" fill="#3d6fa8" fill-rule="evenodd"/>
<path d="M303.5 61.5 v2 M297.5 64.5 v-2 h13 v2 M300 66.5 h8 l-3 2.5 M297 70.5 h14 M304 69 v6.5 l-2 -1" fill="none" stroke="#3d6fa8" stroke-width="1.5"/>

<!-- New Comment -->
<path d="M360 61.5 H377.5 V74.5 L370.5 81.5 H350.5 V67" fill="#fff" stroke="#555" stroke-width="1.2"/>
<path d="M370.5 81.5 V74.5 H377.5" fill="none" stroke="#555" stroke-width="1.1"/>
<g stroke="#ecd27a" stroke-width="1.6"><path d="M354 55 v12 M348 61 h12 M349.8 56.8 l8.4 8.4 M358.2 56.8 l-8.4 8.4"/></g>
<circle cx="354" cy="61" r="2.8" fill="#fbf3d0"/>
<!-- Delete -->
<path d="M413 61.5 H429 V74.5 L422 81.5 H401.5 V67" fill="#f3f0f5" stroke="#aaa" stroke-width="1.2"/>
<path d="M422 81.5 V74.5 H429" fill="none" stroke="#aaa" stroke-width="1.1"/>
<path d="M401 57 L413 67 M414 56 L401 67" stroke="#a9a9a9" stroke-width="2"/>
<!-- Previous (comments) -->
<path d="M461 61.5 H474.5 V74.5 L467.5 81.5 H447.5 V67" fill="#f3f0f5" stroke="#aaa" stroke-width="1.2"/>
<path d="M467.5 81.5 V74.5 H474.5" fill="none" stroke="#aaa" stroke-width="1.1"/>
<path d="M460.5 61 H448 M453 55.5 L447 61 L453 66.5" fill="none" stroke="#aaa" stroke-width="2.2"/>
<!-- Next (comments) -->
<path d="M506 61.5 H520 V74.5 L513 81.5 H493.5 V67" fill="#f3f0f5" stroke="#aaa" stroke-width="1.2"/>
<path d="M513 81.5 V74.5 H520" fill="none" stroke="#aaa" stroke-width="1.1"/>
<path d="M493 61 H505 M500 55.5 L506 61 L500 66.5" fill="none" stroke="#aaa" stroke-width="2.2"/>
<!-- Show Comments -->
<rect x="546.5" y="58.5" width="27" height="24" fill="#fff" stroke="#aaa" stroke-width="1"/>
<rect x="546.5" y="58.5" width="27" height="4.5" fill="#aaa"/>
<path d="M549 66 h13 M549 69.5 h13 M549 73 h13 M549 76.5 h13 M549 80 h13" stroke="#bbb" stroke-width="0.9"/>
<path d="M564.5 63 v19" stroke="#ccc" stroke-width="0.8"/>
<path d="M566 66 h6 M566 71 h6 M566 73 h6 M566 77 h6" stroke="#999" stroke-width="1"/>

<!-- Track Changes -->
<path d="M619.5 57.5 H632.5 L639.5 64.5 V84.5 H619.5 Z" fill="#fff" stroke="#555" stroke-width="1.1"/>
<path d="M632.5 57.5 V64.5 H639.5" fill="none" stroke="#555" stroke-width="1"/>
<path d="M622 64.5 h3 M626 64.5 h3" stroke="#c55" stroke-width="0.9"/>
<path d="M622 67.5 h14 M622 70 h14 M622 72.5 h12 M622 75 h10 M622 77.5 h8" stroke="#8a6a5a" stroke-width="0.8"/>
<path d="M632.9 84.9 L630.1 82.1 L641.6 70.6 L644.4 73.4 Z" fill="#4e6d93"/>
<path d="M628.3 86.7 L630.1 82.1 L632.9 84.9 Z" fill="#4e6d93"/>
<path d="M645.2 72.6 L642.4 69.8 L644.4 67.8 L647.2 70.6 Z" fill="#4e6d93"/>
<!-- All Markup icon -->
<path d="M663.5 55.5 H668 L670.5 58 V66.5 H663.5 Z" fill="#fff" stroke="#666" stroke-width="1"/>
<path d="M665 59.5 h4 M665 61.5 h4 M665 63.5 h3" stroke="#999" stroke-width="0.8"/>
<path d="M670.5 60.5 H675.5 L678.5 63.5 V70.5 H670.5 Z" fill="#fff" stroke="#666" stroke-width="1"/>
<path d="M672 64.5 h4 M672 66.5 h5 M672 68.5 h4" stroke="#c06040" stroke-width="0.8"/>
<path d="M678 61 C678 58 676 57 673 57.5" fill="none" stroke="#3d78b0" stroke-width="1.4"/>
<path d="M675 55 L672.5 57.5 L675 60" fill="none" stroke="#3d78b0" stroke-width="1.4"/>
<path d="M663.5 66.5 C663.5 69 665 70 668 70" fill="none" stroke="#3d78b0" stroke-width="1.4"/>
<path d="M666 67.5 L668.5 70 L666 72.5" fill="none" stroke="#3d78b0" stroke-width="1.4"/>
<!-- All Markup dropdown -->
<rect x="682.5" y="52.5" width="104" height="22" fill="none" stroke="#abadb3" stroke-width="1"/>
<rect x="773" y="53" width="13" height="21" fill="#dae5f3"/>
<path d="M773.5 53 v21" stroke="#abadb3" stroke-width="1"/>
<path d="M777 62.5 h6 l-3 3.5 Z" fill="#444"/>
<!-- Show Markup icon -->
<path d="M665.5 79.5 H672.5 L675.5 82.5 V92.5 H665.5 Z" fill="#fff" stroke="#666" stroke-width="1"/>
<path d="M672.5 79.5 V82.5 H675.5" fill="none" stroke="#666" stroke-width="0.9"/>
<path d="M667 82.5 h4 M667 84.5 h7" stroke="#c07050" stroke-width="0.9"/>
<path d="M667 86.5 h7 M667 88.5 h7 M667 90.5 h7" stroke="#888" stroke-width="0.8"/>
<path d="M757.5 85.5 h5 l-2.5 3 Z" fill="#666"/>
<!-- Reviewing pane highlight -->
<rect x="663.5" y="102.5" width="15.5" height="13" fill="#fff" stroke="#3f4f63" stroke-width="1"/>
<rect x="663.5" y="102.5" width="15.5" height="3" fill="#3f4f63"/>
<path d="M665 110 h4 M673.5 110 h4 M665 113 h12" stroke="#666" stroke-width="0.8"/>
<path d="M671.2 114 v-7 M668.8 109 l2.4 -2.5 l2.4 2.5" fill="none" stroke="#3d6fa8" stroke-width="1.3"/>
<path d="M774.5 108 h6 l-3 3.5 Z" fill="#444"/>
<!-- dialog launcher -->
<path d="M780.5 136.5 v-6 h6 M782 132 L786.5 136.5 M786.5 133.5 v3 h-3" fill="none" stroke="#777" stroke-width="0.9"/>

<!-- Accept -->
<path d="M806.5 57.5 H819.5 L827 65 V84.5 H806.5 Z" fill="#fff" stroke="#555" stroke-width="1.1"/>
<path d="M819.5 57.5 V65 H827" fill="none" stroke="#555" stroke-width="1"/>
<path d="M809.5 73 L814 77.5 L823 67.5" fill="none" stroke="#4e7ab3" stroke-width="2.6"/>
<!-- Reject -->
<path d="M848.5 57.5 H861.5 L869 65 V84.5 H848.5 Z" fill="#fff" stroke="#555" stroke-width="1.1"/>
<path d="M861.5 57.5 V65 H869" fill="none" stroke="#555" stroke-width="1"/>
<path d="M851.5 68 L865.5 79 M865 68.5 L851.5 79.5" fill="none" stroke="#d0704a" stroke-width="2.4"/>
<!-- Previous change -->
<path d="M886.5 55.5 H893 L896.5 59 V70.5 H886.5 V66" fill="#fff" stroke="#555" stroke-width="1"/>
<path d="M893 55.5 V59 H896.5" fill="none" stroke="#555" stroke-width="0.9"/>
<path d="M892 63 H884.5 M887.5 60 L884.5 63 L887.5 66" fill="none" stroke="#3d6fa8" stroke-width="1.7"/>
<!-- Next change -->
<path d="M886.5 78.5 H893 L896.5 82 V93.5 H886.5 V89" fill="#fff" stroke="#555" stroke-width="1"/>
<path d="M893 78.5 V82 H896.5" fill="none" stroke="#555" stroke-width="0.9"/>
<path d="M883.5 86 H891 M888 83 L891 86 L888 89" fill="none" stroke="#3d6fa8" stroke-width="1.7"/>
<!-- Compare -->
<rect x="984.5" y="57.5" width="18" height="24" fill="#fff" stroke="#4e5e6e" stroke-width="1"/>
<rect x="978.5" y="60.5" width="18" height="24" fill="#fff" stroke="#4e5e6e" stroke-width="1"/>
<path d="M997 62 h4 M997 65 h4 M997 68 h4 M997 71 h4 M997 74 h4 M997 77 h4" stroke="#8aa" stroke-width="0.8"/>
<path d="M981 64.5 h13 M981 67.5 h13 M981 70.5 h13 M981 73.5 h13 M981 76.5 h13 M981 79.5 h13" stroke="#6a9ab8" stroke-width="0.9"/>
<!-- Block Authors -->
<circle cx="1049" cy="62" r="6" fill="#b9b9b9"/>
<path d="M1038.5 82 C1038.5 73 1043 69 1049 69 C1053 69 1056 71 1057.5 74 L1055 82 Z" fill="#b9b9b9"/>
<circle cx="1059.5" cy="77" r="7" fill="#fff" stroke="#b9b9b9" stroke-width="2.2"/>
<path d="M1055 72.5 L1064 81.5" stroke="#b9b9b9" stroke-width="2.2"/>
<!-- Restrict Editing -->
<path d="M1093.5 57.5 H1106.5 L1114 65 V84.5 H1093.5 Z" fill="#fff" stroke="#555" stroke-width="1.1"/>
<path d="M1106.5 57.5 V65 H1114" fill="none" stroke="#555" stroke-width="1"/>
<path d="M1107 76 v-3 a5 5 0 0 1 10 0 v3" fill="none" stroke="#e0c060" stroke-width="2"/>
<rect x="1105" y="76" width="14" height="11" fill="#e2c566"/>
<path d="M1112 79 v4" stroke="#fff6d0" stroke-width="1.5"/>

<!-- dropdown arrows -->
<g fill="#555">
<path d="M239.5 111 h5 l-2.5 3 Z"/>
<path d="M295 111 h5 l-2.5 3 Z"/>
<path d="M651 111.5 h5 l-2.5 3 Z"/>
<path d="M814 111 h5 l-2.5 3 Z"/>
<path d="M856.5 111 h5 l-2.5 3 Z"/>
<path d="M987.5 111 h5 l-2.5 3 Z"/>
</g>
<g fill="#bbb">
<path d="M412 111 h5 l-2.5 3 Z"/>
<path d="M1072 111.5 h5 l-2.5 3 Z"/>
</g>
<!-- collapse ribbon caret -->
<path d="M1347 136 L1351 131.5 L1355 136" fill="none" stroke="#555" stroke-width="1.5"/>

<!-- pane close X -->
<g stroke="#666" stroke-width="1.8">
<path d="M800.5 150.5 L807.5 157.5 M807.5 150.5 L800.5 157.5"/>
<path d="M1349.5 150.5 L1356.5 157.5 M1356.5 150.5 L1349.5 157.5"/>
<path d="M1349.5 321.5 L1356.5 328.5 M1356.5 321.5 L1349.5 328.5"/>
</g>

<!-- revisions pane icons -->
<path d="M15 511 L18.5 514.5 L22 511" fill="none" stroke="#555" stroke-width="1.8"/>
<path d="M1326 488 h9 l-4.5 4.5 Z" fill="#555"/>
<path d="M1344 485.5 L1353 494.5 M1353 485.5 L1344 494.5" stroke="#555" stroke-width="2.3"/>
<path d="M1340.5 512 A4.5 4.5 0 0 1 1348.5 510.5 M1348.5 514 A4.5 4.5 0 0 1 1340.5 515.5" fill="none" stroke="#555" stroke-width="1.7"/>
<path d="M1347 508 L1349 511 L1346 511.5 Z M1342 518 L1340 515 L1343 514.5 Z" fill="#666"/>

<!-- status bar icons -->
<g stroke="#e8eef7" fill="none" stroke-width="1">
<path d="M89.5 709.5 h5 l1.5 1.5 l1.5 -1.5 h5 M89.5 709.5 v11 h5 l1.5 1.5 l1.5 -1.5 h5 v-3 M96 711 v10.5" />
<path d="M98.5 711.5 l4 4 M102.5 711.5 l-4 4" stroke-width="1.4"/>
<path d="M1086.5 710.5 h5.5 l1 1 l1 -1 h5.5 v11 h-5.5 l-1 1 l-1 -1 h-5.5 Z M1093 711.5 v10"/>
<path d="M1088 713 h3.5 M1088 715.5 h3.5 M1088 718 h3.5 M1094.5 713 h3.5 M1094.5 715.5 h3.5 M1094.5 718 h3.5" stroke-width="1.2"/>
<path d="M1124.5 709.5 h13 v13 h-13 Z M1126.5 712 h9 M1126.5 714.5 h9 M1126.5 717 h9 M1126.5 719.5 h9"/>
<path d="M1162.5 709.5 h9 v8 M1162.5 709.5 v12 h7 M1164.5 712 h5 M1164.5 714.5 h5 M1164.5 717 h3"/>
</g>
<circle cx="1172.5" cy="718.5" r="3.8" fill="#e8eef7"/>
<path d="M1170 717 l3 1 l2 -2 M1171 720 l2 -1.5" stroke="#214a84" stroke-width="0.8" fill="none"/>
<path d="M1193 716 h6" stroke="#fff" stroke-width="2"/>
<path d="M1203 716 h99" stroke="#e8eef7" stroke-width="1"/>
<rect x="1251" y="710.5" width="4" height="11" fill="#fff"/>
<path d="M1306.5 716 h9 M1311 711.5 v9" stroke="#fff" stroke-width="2"/>
</svg>

<svg style="position:absolute;left:0;top:0;z-index:7" width="1365" height="726" viewBox="0 0 1365 726">
<g fill="none" stroke="#d42433" stroke-width="3">
<rect x="1.5" y="135.5" width="129" height="37" rx="16" ry="16"/>
<rect x="814" y="138.5" width="120" height="37" rx="15" ry="15"/>
<rect x="822" y="312" width="116.5" height="32" rx="14" ry="14"/>
<rect x="28" y="503" width="90" height="24" rx="11" ry="11"/>
</g>
<g fill="none" stroke="#d9202b" stroke-width="3.6" stroke-linecap="round">
<path d="M637.5 356 Q610 336 568 327.5 Q520 316 473 299"/>
<path d="M663.5 349 C663 320 660 292 645 281 C630 271 605 266 588 256"/>
<path d="M690 348 C690 325 705 305 725 290 C740 278 748 270 751 257"/>
</g>
<g fill="#d9202b">
<path d="M458 289.5 L479 292 L467 305.5 Z"/>
<path d="M576 244 L593 256 L582 262 Z"/>
<path d="M754 242 L760 262 L745 260 Z"/>
</g>
<g fill="none" stroke="#d9202b" stroke-width="3">
<path d="M116 560.5 H177.5 V685.5 H123 M177.5 613.5 H273"/>
</g>
</svg>
</body></html>
